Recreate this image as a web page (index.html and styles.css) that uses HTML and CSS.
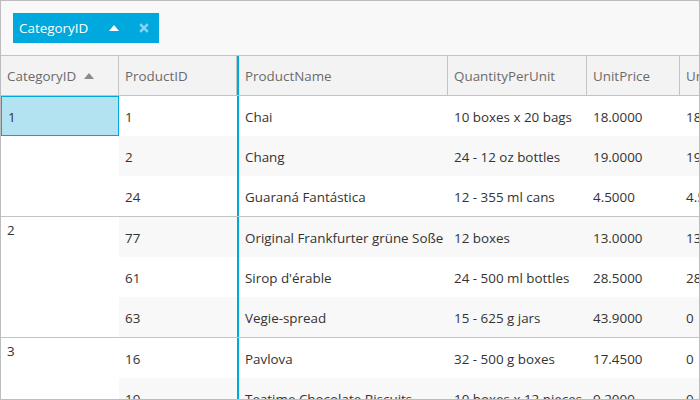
FILE: index.html
```html
<!DOCTYPE html>
<html>
<head>
<meta charset="utf-8">
<link rel="stylesheet" href="styles.css">
</head>
<body>
<div class="grid">
  <div class="group-panel">
    <div class="chip">
      <span class="chip-text">CategoryID</span>
      <span class="chip-icons">
        <svg class="chip-sort" width="10" height="6" viewBox="0 0 10 6"><polygon points="5,0 10,6 0,6" fill="#ffffff"/></svg>
        <svg class="chip-close" width="10" height="10" viewBox="0 0 10 10"><path d="M1.2 1.2 L8.8 8.8 M8.8 1.2 L1.2 8.8" stroke="#86d4ef" stroke-width="2.6" stroke-linecap="butt" fill="none"/></svg>
      </span>
    </div>
  </div>
  <div class="header">
    <div class="hcell w-cat">CategoryID<svg class="sort-icon" width="10" height="6" viewBox="0 0 10 6"><polygon points="5,0 10,6 0,6" fill="#8a8a8a"/></svg></div>
    <div class="hcell w-pid">ProductID</div>
    <div class="hcell w-name">ProductName</div>
    <div class="hcell w-qty">QuantityPerUnit</div>
    <div class="hcell w-price">UnitPrice</div>
    <div class="hcell w-last">UnitsInStock</div>
  </div>
  <div class="body">
    <div class="group">
      <div class="cat cat-first"><div class="selected">1</div></div>
      <div class="rows">
        <div class="row"><div class="cell w-pid">1</div><div class="cell w-name">Chai</div><div class="cell w-qty">10 boxes x 20 bags</div><div class="cell w-price">18.0000</div><div class="cell w-last">18.0000</div></div>
        <div class="row alt"><div class="cell w-pid">2</div><div class="cell w-name">Chang</div><div class="cell w-qty">24 - 12 oz bottles</div><div class="cell w-price">19.0000</div><div class="cell w-last">19.0000</div></div>
        <div class="row"><div class="cell w-pid">24</div><div class="cell w-name">Guaraná Fantástica</div><div class="cell w-qty">12 - 355 ml cans</div><div class="cell w-price">4.5000</div><div class="cell w-last">4.5000</div></div>
      </div>
    </div>
    <div class="group">
      <div class="cat">2</div>
      <div class="rows">
        <div class="row alt"><div class="cell w-pid">77</div><div class="cell w-name">Original Frankfurter grüne Soße</div><div class="cell w-qty">12 boxes</div><div class="cell w-price">13.0000</div><div class="cell w-last">13.0000</div></div>
        <div class="row"><div class="cell w-pid">61</div><div class="cell w-name">Sirop d'érable</div><div class="cell w-qty">24 - 500 ml bottles</div><div class="cell w-price">28.5000</div><div class="cell w-last">28.5000</div></div>
        <div class="row alt"><div class="cell w-pid">63</div><div class="cell w-name">Vegie-spread</div><div class="cell w-qty">15 - 625 g jars</div><div class="cell w-price">43.9000</div><div class="cell w-last">0</div></div>
      </div>
    </div>
    <div class="group">
      <div class="cat">3</div>
      <div class="rows">
        <div class="row"><div class="cell w-pid">16</div><div class="cell w-name">Pavlova</div><div class="cell w-qty">32 - 500 g boxes</div><div class="cell w-price">17.4500</div><div class="cell w-last">0</div></div>
        <div class="row alt"><div class="cell w-pid">19</div><div class="cell w-name">Teatime Chocolate Biscuits</div><div class="cell w-qty">10 boxes x 12 pieces</div><div class="cell w-price">9.2000</div><div class="cell w-last">0</div></div>
      </div>
    </div>
  </div>
</div>
</body>
</html>
```
FILE: styles.css
```css
html, body {
  margin: 0;
  padding: 0;
  background: #ffffff;
}

.grid {
  width: 700px;
  height: 400px;
  box-sizing: border-box;
  border: 1px solid #bdbdbd;
  overflow: hidden;
  background: #ffffff;
  display: flex;
  flex-direction: column;
  font-family: "Open Sans", "Noto Sans", sans-serif;
  font-size: 13.4px;
  color: #333333;
}

.group-panel {
  flex: none;
  height: 55px;
  box-sizing: border-box;
  padding: 12px;
  background: #f8f8f8;
  border-bottom: 1px solid #c4c4c4;
}

.chip {
  width: 146px;
  height: 30px;
  box-sizing: border-box;
  padding: 0 10px 0 6px;
  background: #00a9dd;
  color: #ffffff;
  display: flex;
  align-items: center;
}

.chip-text {
  flex: 1;
  white-space: nowrap;
}

.chip-icons {
  display: flex;
  align-items: center;
  gap: 20px;
}

.chip-icons svg {
  display: block;
}

.header {
  flex: none;
  display: flex;
  height: 40px;
  box-sizing: border-box;
  border-bottom: 1px solid #c4c4c4;
  background: #f3f3f3;
  color: #6b6b6b;
}

.hcell {
  flex: none;
  display: flex;
  align-items: center;
  box-sizing: border-box;
  padding-left: 6px;
  padding-top: 1px;
  border-right: 1px solid #c4c4c4;
  white-space: nowrap;
  overflow: hidden;
}

.sort-icon {
  display: block;
  margin-left: 8px;
}

.w-cat { width: 118px; }
.w-pid { width: 118px; }
.w-name { width: 211px; border-left: 2px solid #00a9dd; }
.w-qty { width: 139px; }
.w-price { width: 93px; }
.w-last { flex: 1; min-width: 0; border-right: none; }

.body {
  flex: 1;
  overflow: hidden;
}

.group {
  display: flex;
}

.group + .group {
  border-top: 1px solid #c4c4c4;
}

.cat {
  flex: none;
  width: 118px;
  box-sizing: border-box;
  padding: 3px 6px 0 6px;
  line-height: 20px;
}

.cat-first {
  padding: 0;
}

.selected {
  height: 40px;
  box-sizing: border-box;
  border: 1px solid #00a9dd;
  background: #b3e3f1;
  display: flex;
  align-items: center;
  padding-left: 6px;
  padding-top: 1px;
}

.rows {
  flex: 1;
  min-width: 0;
}

.row {
  display: flex;
  height: 40px;
}

.row.alt {
  background: #f8f8f8;
}

.cell {
  flex: none;
  display: flex;
  align-items: center;
  box-sizing: border-box;
  padding-left: 6px;
  padding-top: 1px;
  white-space: nowrap;
  overflow: hidden;
}
```
